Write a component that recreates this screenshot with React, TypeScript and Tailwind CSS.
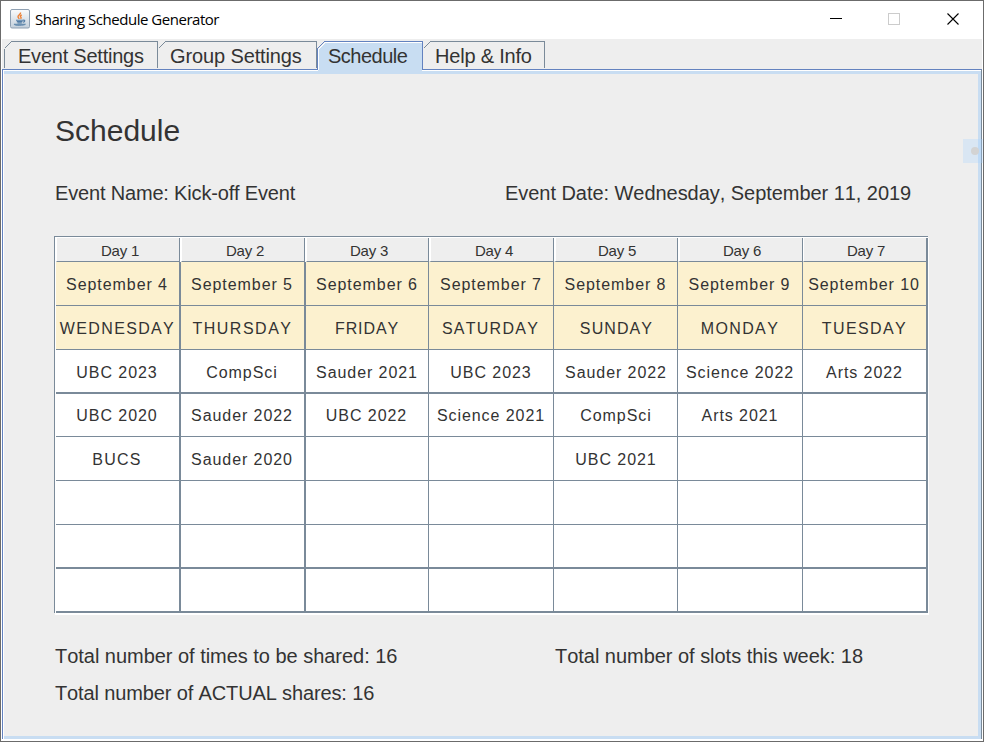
import React from "react";

type Cell = [string, string];

const T0 = "tracking-[0.93px]";
const TL = "tracking-[0.93px] pr-[1px]";

const days = ["Day 1", "Day 2", "Day 3", "Day 4", "Day 5", "Day 6", "Day 7"];

const rows: { size: string; shaded?: boolean; cells: Cell[] }[] = [
  {
    size: "h-[44px] border-b pt-[2px]",
    shaded: true,
    cells: [["September 4", TL], ["September 5", TL], ["September 6", T0], ["September 7", T0], ["September 8", T0], ["September 9", TL], ["September 10", TL]],
  },
  {
    size: "h-[44px] border-b pt-[2px]",
    shaded: true,
    cells: [["WEDNESDAY", "tracking-[1.35px]"], ["THURSDAY", "tracking-[1.5px]"], ["FRIDAY", "tracking-[0.9px]"], ["SATURDAY", "tracking-[1.25px] pr-[1px]"], ["SUNDAY", "tracking-[1.1px] pl-[2px]"], ["MONDAY", "tracking-[1.35px]"], ["TUESDAY", "tracking-[1.4px]"]],
  },
  {
    size: "h-[44px] border-b-2 pt-[3px]",
    cells: [["UBC 2023", TL], ["CompSci", TL], ["Sauder 2021", T0], ["UBC 2023", T0], ["Sauder 2022", "tracking-[0.93px] pl-[1px]"], ["Science 2022", T0], ["Arts 2022", T0]],
  },
  {
    size: "h-[43px] border-b pt-[2px]",
    cells: [["UBC 2020", TL], ["Sauder 2022", TL], ["UBC 2022", TL], ["Science 2021", T0], ["CompSci", "tracking-[0.93px] pl-[1px]"], ["Arts 2021", T0], ["", T0]],
  },
  {
    size: "h-[44px] border-b pt-[2px]",
    cells: [["BUCS", "tracking-[1.3px] pr-[1px]"], ["Sauder 2020", TL], ["", T0], ["", T0], ["UBC 2021", "tracking-[0.93px] pl-[1px]"], ["", T0], ["", T0]],
  },
  { size: "h-[44px] border-b", cells: days.map((): Cell => ["", T0]) },
  { size: "h-[44px] border-b-2", cells: days.map((): Cell => ["", T0]) },
  { size: "h-[44px] border-b-2", cells: days.map((): Cell => ["", T0]) },
];

const edges = ["border-r-2", "border-r-2", "border-r", "border-r", "border-r", "border-r", "border-r-2"];
const headerEdges = [
  "border-l border-r mr-px pl-[4px]",
  "border-l border-r mr-px pl-[4px]",
  "border-l border-r pl-[3px]",
  "border-l-2 border-r pl-[4px]",
  "border-l-2 border-r pl-[1px]",
  "border-l-2 border-r pl-[2px]",
  "border-l border-r-2 pl-[2px]",
];
const columns = "grid grid-cols-[125px_125px_123px_125px_124px_125px_125px]";

function JavaIcon() {
  return (
    <svg width="20" height="20" viewBox="0 0 20 20" className="shrink-0">
      <defs>
        <linearGradient id="plate" x1="0" y1="0" x2="0" y2="1">
          <stop offset="0" stopColor="#fafbfc" />
          <stop offset="1" stopColor="#c3cfdb" />
        </linearGradient>
      </defs>
      <rect x="0.5" y="0.5" width="19" height="18.5" rx="1.5" fill="url(#plate)" stroke="#8fa0b2" />
      <path d="M10.5 3.500c.6 1.700-3 2.600-2.500 4.400.2.900 1.100 1.200 1.200 2M11.700 5.800c-1.500.9-1.700 1.500-.8 2.400.5.600.1 1.100-.4 1.500" fill="none" stroke="#ee8035" strokeWidth="1.400" />
      <path d="M6 11.200h7M6.800 12.600h5.700M7.500 14h4.300M13 11.200c2.600-.5 2.200 1.600 0 2" fill="none" stroke="#527ca5" strokeWidth="1.100" />
      <path d="M4 15.200c0 1.700 10.500 1.500 11.500 0z" fill="#7f9dbb" stroke="#527ca5" strokeWidth="0.700" />
    </svg>
  );
}

function Tab({ label, active, box, text }: { label: string; active?: boolean; box: string; text: string }) {
  return (
    <div className={`relative ${box} ${active ? "z-10 h-[33px]" : "h-[27px]"}`}>
      {active ? (
        <svg className="absolute inset-0 h-full w-full overflow-visible" shapeRendering="crispEdges">
          <path d="M1 33V9L8 2H105V33Z" fill="#c8ddf2" />
          <path d="M1.500 29V8.500L8.500 1.500H105" fill="none" stroke="#fff" />
          <path d="M0.500 29V7.500L7.500 0.500H105.500V29" fill="none" stroke="#6382bf" />
        </svg>
      ) : (
        <>
          <div className="absolute top-0 right-0 bottom-0 left-[7px] border-t border-r border-[#7a8a99]" />
          <svg className="absolute top-0 left-0" width="9" height="27" shapeRendering="crispEdges">
            <path d={`M0.500 7.500L7.500 0.500${label === "Event Settings" ? "M0.500 8V27" : ""}`} fill="none" stroke="#7a8a99" />
          </svg>
        </>
      )}
      <span className={`relative block text-[20px] leading-[30px] whitespace-pre ${text}`}>{label}</span>
    </div>
  );
}

export default function App() {
  return (
    <div className="relative flex h-[742px] w-[984px] flex-col overflow-hidden border border-[#6b6b6b] bg-white font-['Liberation_Sans',Arial,sans-serif] text-[#333] [font-kerning:none]">
      <header className="flex h-[38px] shrink-0 items-start">
        <div className="flex pt-[8px] pl-[9px]">
          <JavaIcon />
          <span className="ml-[5px] text-[15px] leading-[21px] tracking-[-0.475px] whitespace-pre text-black font-['Open_Sans','Noto_Sans',sans-serif]">Sharing Schedule Generator</span>
        </div>
        <svg className="mt-[10px] mr-[22px] ml-auto" width="132" height="16" viewBox="0 0 132 16">
          <path d="M1 7.500h12" stroke="#000" />
          <rect x="59.500" y="2.500" width="11" height="11" fill="none" stroke="#ccc" />
          <path d="M118.500 2.500l11 11M129.500 2.500l-11 11" stroke="#000" strokeWidth="1.100" />
        </svg>
      </header>

      <nav className="mx-px flex h-[30px] shrink-0 bg-[#eee] pt-[2px] pl-[2px]">
        <Tab label="Event Settings" box="w-[154px]" text="pl-[14px] tracking-[-0.23px]" />
        <Tab label="Group Settings" box="w-[159px]" text="pl-[12px] tracking-[-0.12px]" />
        <Tab label="Schedule" active box="w-[106px]" text="pl-[11px] tracking-[-0.5px]" />
        <Tab label="Help &amp; Info" box="w-[122px]" text="pl-[12px] tracking-[-0.2px]" />
      </nav>

      <main className="mr-px mb-[2px] ml-px flex min-h-0 flex-1 flex-col border-t border-r border-l border-t-[#6382bf] border-r-[#7a8a99] border-l-[#6382bf] bg-white pt-px pl-px">
        <div className="flex flex-1 flex-col border-t-[3px] border-r-[3px] border-b-[3px] border-[#c8ddf2] bg-[#eee]">
          <h1 className="mt-[39px] ml-[51px] text-[30px] leading-[36px]">Schedule</h1>
          <div className="mt-[32px] flex h-[24px] pl-[51px] text-[20px] leading-[24px] whitespace-pre">
            <span className="w-[450px] tracking-[-0.17px]">Event Name: Kick-off Event</span>
            <span className="tracking-[-0.045px]">Event Date: Wednesday, September 11, 2019</span>
          </div>

          <div className="mt-[31px] ml-[50px] w-[874px] border-t border-l border-[#7a8a99] bg-white pt-px pl-px shadow-[1px_2px_0_#fff]">
            <div className={`${columns} h-[24px] w-[872px]`}>
              {days.map((d, i) => (
                <div key={d} className={`h-[24px] border-b border-l-white border-r-[#7a8a99] border-b-[#7a8a99] bg-[#eee] pt-[2px] text-center text-[15px] leading-[22px] tracking-[-0.2px] ${headerEdges[i]}`}>
                  {d}
                </div>
              ))}
            </div>
            {rows.map((row, r) => (
              <div key={r} className={`${columns} w-[872px]`}>
                {row.cells.map(([label, tracking], c) => (
                  <div key={c} className={`flex items-center justify-center border-[#7a8a99] text-[16px] whitespace-pre ${row.size} ${edges[c]} ${tracking} ${row.shaded ? "bg-[#fcf1cf]" : "bg-white"}`}>
                    {label}
                  </div>
                ))}
              </div>
            ))}
          </div>

          <div className="mt-[31px] flex h-[24px] pl-[51px] text-[20px] leading-[24px] whitespace-pre">
            <span className="w-[500px] tracking-[-0.03px]">Total number of times to be shared: 16</span>
            <span className="tracking-[-0.03px]">Total number of slots this week: 18</span>
          </div>
          <div className="mt-[13px] pl-[51px] text-[20px] leading-[24px] tracking-[-0.13px] whitespace-pre">Total number of ACTUAL shares: 16</div>
        </div>
      </main>
      <div className="absolute top-[138px] right-0 h-[24px] w-[20px] bg-[#a8d4ff]/30">
        <div className="absolute top-[8px] left-[8px] h-[8px] w-[8px] rounded-full bg-[#d3d3d3]" />
      </div>
    </div>
  );
}
